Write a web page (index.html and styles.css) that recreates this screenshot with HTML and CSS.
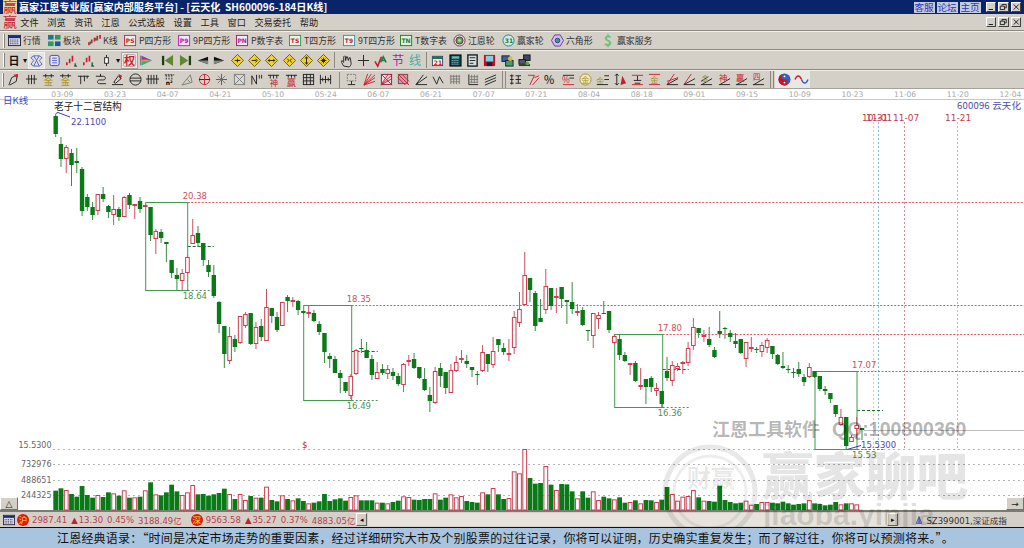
FILE: index.html
```html
<!DOCTYPE html>
<html lang="zh-CN">
<head>
<meta charset="utf-8">
<title>赢家江恩专业版</title>
<link rel="stylesheet" href="styles.css">
</head>
<body>
<div class="app">
  <header class="titlebar">
    <svg class="ic logo" viewBox="0 0 14 14"><rect width="14" height="14" fill="#e8d8a0"/><text class="t red" x="0" y="12" font-size="14">赢</text></svg>
    <span class="title-text">赢家江恩专业版[赢家内部服务平台] - [云天化  SH600096-184日K线]</span>
    <div class="title-links">
      <a class="tlink">客服</a><a class="tlink">论坛</a><a class="tlink">主页</a>
    </div>
    <div class="wbtns">
      <button class="wbtn"><svg viewBox="0 0 10 9"><path d="M2 7h5v1H2z"/></svg></button>
      <button class="wbtn"><svg viewBox="0 0 10 9"><path class="ln" d="M3.5 3V1.5h5v4H7M1.5 3.500h5v4h-5z"/></svg></button>
      <button class="wbtn"><svg viewBox="0 0 10 9"><path class="ln" d="M2 1.500l6 6M8 1.500l-6 6"/></svg></button>
    </div>
  </header>

  <nav class="menubar">
    <svg class="ic menu-logo" viewBox="0 0 14 14"><text class="t red" x="0" y="12" font-size="14">赢</text></svg>
    <span class="mi">文件</span><span class="mi">浏览</span><span class="mi">资讯</span><span class="mi">江恩</span><span class="mi">公式选股</span><span class="mi">设置</span><span class="mi">工具</span><span class="mi">窗口</span><span class="mi">交易委托</span><span class="mi">帮助</span>
    <div class="wbtns menu-wbtns">
      <button class="wbtn"><svg viewBox="0 0 10 9"><path d="M2 7h5v1H2z"/></svg></button>
      <button class="wbtn"><svg viewBox="0 0 10 9"><path class="ln" d="M3.5 3V1.500h5v4H7M1.500 3.500h5v4h-5z"/></svg></button>
      <button class="wbtn"><svg viewBox="0 0 10 9"><path class="ln" d="M2 1.500l6 6M8 1.500l-6 6"/></svg></button>
    </div>
  </nav>

  <div class="toolbar row1">
    <i class="grip"></i>
    <span class="tb w33"><svg class="ic" viewBox="0 0 14 14"><rect x="0.500" y="1.500" width="13" height="11" fill="#d8d8f0" stroke="#223"/><rect x="1" y="2" width="12" height="2.500" fill="#1a2a80"/><path class="k" d="M2 6.500h10M2 8.500h10M2 10.500h10" stroke-dasharray="1 1"/></svg><span>行情</span></span>
    <span class="tb w40"><svg class="ic" viewBox="0 0 14 14"><rect x="0" y="1" width="6" height="5" fill="#1a7a8a"/><rect x="7.500" y="1" width="6" height="5" fill="#2a9a60"/><rect x="0" y="8" width="6" height="5" fill="#2a9a60"/><rect x="7.500" y="8" width="6" height="5" fill="#1a5aa0"/></svg><span>板块</span></span>
    <span class="tb w36"><svg class="ic" viewBox="0 0 14 14"><path class="r2" d="M1 12v-3M4 10v-4M7 8V4M10 7V2M13 5V1"/><path class="g2" d="M2.500 11V8M8.500 7V4"/></svg><span>K线</span></span>
    <span class="tb w54"><svg class="ic" viewBox="0 0 14 14"><rect x="0.500" y="1.500" width="12" height="11" fill="#eee" stroke="#c03040"/><text class="t tiny red" x="2" y="9.500">PS</text></svg><span>P四方形</span></span>
    <span class="tb w58"><svg class="ic" viewBox="0 0 14 14"><rect x="0.500" y="1.500" width="12" height="11" fill="#f4e8f8" stroke="#c020c0"/><text class="t tiny mag" x="2" y="9.500">P9</text></svg><span>9P四方形</span></span>
    <span class="tb w53"><svg class="ic" viewBox="0 0 14 14"><rect x="0.500" y="1.500" width="12" height="11" fill="#eee" stroke="#a02060"/><text class="t tiny mag" x="1.500" y="9.500">PN</text></svg><span>P数字表</span></span>
    <span class="tb w54"><svg class="ic" viewBox="0 0 14 14"><rect x="0.500" y="1.500" width="12" height="11" fill="#e8f4e8" stroke="#20a040"/><text class="t tiny red" x="2" y="9.500">TS</text></svg><span>T四方形</span></span>
    <span class="tb w57"><svg class="ic" viewBox="0 0 14 14"><rect x="0.500" y="1.500" width="12" height="11" fill="#e8f8f4" stroke="#20a0a0"/><text class="t tiny red" x="2" y="9.500">T9</text></svg><span>9T四方形</span></span>
    <span class="tb w53"><svg class="ic" viewBox="0 0 14 14"><rect x="0.500" y="1.500" width="12" height="11" fill="#e0f0e0" stroke="#208020"/><text class="t tiny grn" x="1.500" y="9.500">TN</text></svg><span>T数字表</span></span>
    <span class="tb w49"><svg class="ic" viewBox="0 0 14 14"><circle cx="7" cy="7" r="6" fill="#e8d8d8" stroke="#803050"/><circle cx="7" cy="7" r="3.800" fill="#60a060" stroke="#404040"/><circle cx="7" cy="7" r="1.500" fill="#d0d0a0"/></svg><span>江恩轮</span></span>
    <span class="tb w49"><svg class="ic" viewBox="0 0 14 14"><circle cx="7" cy="7" r="6" fill="#d0e8e0" stroke="#208080"/><text class="t tiny grn" x="3" y="10">31</text></svg><span>赢家轮</span></span>
    <span class="tb w51"><svg class="ic" viewBox="0 0 14 14"><path d="M4 1h6l3.500 6L10 13H4L.5 7z" fill="#d0c0e8" stroke="#7030a0"/><circle cx="7" cy="7" r="2.500" fill="#40a060" stroke="#2040a0"/></svg><span>六角形</span></span>
    <span class="tb"><svg class="ic" viewBox="0 0 14 14"><text class="t" x="2" y="13" font-size="15" fill="#70c070" font-weight="700">$</text></svg><span>赢家服务</span></span>
  </div>

  <div class="toolbar row2">
    <i class="grip"></i>
    <span class="btn day">日</span><span class="caret">▾</span>
    <span class="btn raised"><svg class="ic" viewBox="0 0 14 14"><path class="b" d="M1 4l3-2h6l3 2-3 3 3 4-3 2H4l-3-2 3-4zM4 2l3 5 3-5M4 13l3-6 3 6"/></svg></span>
    <span class="btn"><svg class="ic" viewBox="0 0 14 14"><rect x="2" y="1.500" width="10" height="11" rx="2" fill="#e0e0f8" stroke="#4040b0"/><path class="b" d="M4.500 4.500h5M4.500 7h5M4.500 9.500h5"/></svg></span>
    <span class="btn"><svg class="ic" viewBox="0 0 14 14"><path class="r2" d="M2 12V9M5 10V5M8 8V2"/><path class="g2" d="M11 13v-3"/><path class="k" d="M10 13h3"/></svg></span>
    <span class="btn"><svg class="ic" viewBox="0 0 14 14"><path class="r2" d="M2 12V9M5 9V4M8 8V2"/><path class="g2" d="M11 13V9"/><path class="k" d="M10 13h3"/></svg></span>
    <span class="btn"><svg class="ic" viewBox="0 0 14 14"><path class="k" d="M7 1v3M7 10v3"/><rect x="5" y="4" width="4" height="6" fill="#fff" stroke="#222"/></svg></span><span class="caret">▾</span>
    <span class="btn pressed"><svg class="ic" viewBox="0 0 14 14"><rect x="0.500" y="0.500" width="13" height="13" rx="2" fill="#f6e8e8" stroke="#b0a0a0"/><text class="t red" x="1" y="11.500" font-size="12" font-weight="700">权</text></svg></span>
    <span class="btn"><svg class="ic" viewBox="0 0 16 14"><path d="M1 1v12" stroke="#404040" fill="none"/><path d="M2 1l13 6H2z" fill="#a030c0"/><path d="M2 7h13L2 13z" fill="#30b090"/><path d="M2 6h8v2H2z" fill="#e0a020"/></svg></span>
    <i class="sep-s"></i>
    <span class="btn"><svg class="ic" viewBox="0 0 14 14"><path fill="#204010" d="M1 2h2.500v10H1z"/><path fill="#608830" d="M13 1v12L4 7z"/></svg></span>
    <span class="btn"><svg class="ic" viewBox="0 0 14 14"><path fill="#204010" d="M10.500 2H13v10h-2.500z"/><path fill="#608830" d="M1 1v12l9-6z"/></svg></span>
    <span class="btn"><svg class="ic" viewBox="0 0 14 14"><path fill="#101010" d="M13 3v8L2 7z"/><path fill="#808880" d="M13 7v4L2 7z"/></svg></span>
    <span class="btn"><svg class="ic" viewBox="0 0 14 14"><path fill="#101010" d="M1 3v8l11-4z"/><path fill="#808880" d="M1 7v4l11-4z"/></svg></span>
    <span class="btn"><svg class="ic" viewBox="0 0 14 14"><path class="dia" d="M7 .5L13.500 7 7 13.500.5 7z"/><path class="k" d="M4 7h6M7 5v4"/></svg></span>
    <span class="btn"><svg class="ic" viewBox="0 0 14 14"><path class="dia" d="M7 .5L13.500 7 7 13.500.5 7z"/><path class="k" d="M4 7h5M8 5l2 2-2 2"/></svg></span>
    <span class="btn"><svg class="ic" viewBox="0 0 14 14"><path class="dia" d="M7 .5L13.500 7 7 13.500.5 7z"/><path class="k" d="M3.500 7h7M5 5.500L3.500 7 5 8.500M9 5.500L10.500 7 9 8.500"/></svg></span>
    <span class="btn"><svg class="ic" viewBox="0 0 14 14"><path class="dia" d="M7 .5L13.500 7 7 13.500.5 7z"/><path class="k" d="M4.500 5l2 2-2 2M9.500 5l-2 2 2 2"/></svg></span>
    <span class="btn"><svg class="ic" viewBox="0 0 14 14"><path class="dia" d="M7 .5L13.500 7 7 13.500.5 7z"/><path class="k" d="M7 3v8M5.500 5L7 3l1.500 2M5.500 9L7 11l1.500-2"/></svg></span>
    <span class="btn"><svg class="ic" viewBox="0 0 14 14"><path class="dia" d="M7 .5L13.500 7 7 13.500.5 7z"/><path class="k" d="M7 4v6M4 7h6M5 5l4 4M9 5l-4 4"/></svg></span>
    <i class="sep-e"></i>
    <span class="btn"><svg class="ic" viewBox="0 0 14 14"><path class="k" d="M4 13c-2-3-3-5-2-6l2 2V3l1-1 1 1v4l1-4h1l1 4 1-3h1l1 6c0 2-1 3-2 4z"/></svg></span>
    <span class="btn"><svg class="ic" viewBox="0 0 14 14"><path class="k" d="M7 1v12M1 7h12"/></svg></span>
    <span class="btn"><svg class="ic" viewBox="0 0 14 14"><path class="r2" d="M1 8l3 5 4-10"/><path class="g2" d="M7 9l3-6 3 6M8 7h4"/></svg></span>
    <span class="btn"><svg class="ic" viewBox="0 0 14 14"><text class="t mag" x="0" y="12" font-size="13">节</text></svg></span>
    <span class="btn"><svg class="ic" viewBox="0 0 14 14"><text class="t" x="0" y="12" font-size="13" fill="#40b0a0">线</text></svg></span>
    <i class="sep-e"></i>
    <span class="btn"><svg class="ic" viewBox="0 0 14 14"><rect x="1.500" y="2.500" width="11" height="10" fill="#f8f8f0" stroke="#404060"/><rect x="1.500" y="2.500" width="11" height="3" fill="#207060"/><text class="t tiny red" x="3" y="11.500">21</text></svg></span>
    <span class="btn"><svg class="ic" viewBox="0 0 14 14"><rect x="1" y="1" width="12" height="12" fill="#104050" stroke="#000"/><rect x="3" y="2.500" width="8" height="2.500" fill="#60c0c0"/><path d="M3 7h8M3 9h8M3 11h8" stroke="#c0e0e0" stroke-dasharray="1 1" fill="none"/></svg></span>
    <span class="btn"><svg class="ic" viewBox="0 0 14 14"><rect x="2" y="1" width="10" height="12" fill="#d0e0d8" stroke="#102030" stroke-width="1.500"/><path class="k" d="M4 4h6M4 7h6M4 10h4"/></svg></span>
    <span class="btn"><svg class="ic" viewBox="0 0 14 14"><rect x="1" y="1" width="12" height="12" fill="#c01020"/><rect x="3" y="2" width="8" height="6" fill="#80d0e0"/><rect x="4" y="9" width="6" height="4" fill="#102040"/></svg></span>
    <span class="btn"><svg class="ic" viewBox="0 0 14 14"><rect x="1" y="2" width="8" height="6" fill="#4060a0" stroke="#102040"/><rect x="5" y="7" width="8" height="6" fill="#40a060" stroke="#102040"/><circle cx="10" cy="5" r="2.500" fill="#d0c040"/></svg></span>
    <span class="btn"><svg class="ic" viewBox="0 0 14 14"><rect x="6" y="1" width="7" height="6" fill="#404858" stroke="#101820"/><rect x="1" y="6" width="7" height="5" fill="#505868" stroke="#101820"/><path d="M1 12h12" stroke="#304030" stroke-width="2"/><circle cx="10" cy="10" r="2" fill="#60a040"/></svg></span>
  </div>

  <div class="toolbar row3">
    <i class="grip"></i>
    <span class="btn"><svg class="ic" viewBox="0 0 14 14"><path class="k" d="M2 13l3-8 6-3-1 7-7 4"/><path d="M7 2l5-1-1 5z" fill="#d02030"/></svg></span>
    <span class="btn"><svg class="ic" viewBox="0 0 14 14"><path class="k" d="M4 2v10M7 2v10M10 2v10M1 6.500h12"/></svg></span>
    <span class="btn"><svg class="ic" viewBox="0 0 14 14"><path class="k" d="M1 3h12M4 1v4M10 1v4"/><text class="t au" x="2" y="13" font-size="10">金</text></svg></span>
    <span class="btn"><svg class="ic" viewBox="0 0 14 14"><path class="k" d="M1 3h12M4 1v4M10 1v4"/><text class="t au" x="2" y="13" font-size="10">金</text></svg></span>
    <span class="btn"><svg class="ic" viewBox="0 0 14 14"><path class="k" d="M1 3.500h12M4 3v9M8 3v6M11 3v3"/></svg></span>
    <span class="btn"><svg class="ic" viewBox="0 0 14 14"><path class="k" d="M2 3.500h8c3 0 3 4 0 4H6c-3 0-3 4 0 4h7"/><path class="k" d="M7 1v3"/></svg></span>
    <span class="btn"><svg class="ic" viewBox="0 0 14 14"><path d="M8 1l4 2-2 4z" fill="#d02030"/><path class="k" d="M1 12.500h12M3 10l5-7 3 3-6 5z"/></svg></span>
    <span class="btn"><svg class="ic" viewBox="0 0 14 14"><circle class="k" cx="7" cy="7" r="6"/><path class="k" d="M1 5.500h12M1 8.500h12"/></svg></span>
    <span class="btn"><svg class="ic" viewBox="0 0 14 14"><path class="k" d="M2.500 2v10M5.500 2v10M8.500 2v10M11.500 2v10M0 6.500h14"/></svg></span>
    <span class="btn"><svg class="ic" viewBox="0 0 14 14"><path class="k" d="M2 2h10M3.500 2v5M6.500 2v5M9.500 2v5" stroke-dasharray="2 1"/><text class="t tiny" x="3" y="13">n²</text></svg></span>
    <span class="btn"><svg class="ic" viewBox="0 0 14 14"><path class="gy" d="M1 13L10 2l2 8zM7 7l3 3"/></svg></span>
    <span class="btn"><svg class="ic" viewBox="0 0 14 14"><circle cx="7" cy="7" r="5.500" fill="none" stroke="#c03040"/><path class="k" d="M1 7h12"/><path class="r" d="M7 1v12"/></svg></span>
    <span class="btn"><svg class="ic" viewBox="0 0 14 14"><path class="r" d="M7 1v12M1 7h12"/><path class="gy" d="M3 3l8 8M11 3l-8 8"/></svg></span>
    <span class="btn"><svg class="ic" viewBox="0 0 14 14"><rect x="1.500" y="1.500" width="11" height="11" fill="#d8d8d8" stroke="#808080"/><path class="gy" d="M2 2l10 10M12 2L2 12"/></svg></span>
    <span class="btn"><svg class="ic" viewBox="0 0 14 14"><path class="k" d="M2 12.500V3l5 9V2M10 2v4M12.500 2v4"/></svg></span>
    <span class="btn"><svg class="ic" viewBox="0 0 14 14"><path class="k" d="M1 2.500h12M3.500 2v4M7 2v4M10.500 2v4"/><text class="t red" x="3" y="14" font-size="9">神</text></svg></span>
    <span class="btn"><svg class="ic" viewBox="0 0 14 14"><path class="k" d="M1 2.500h12M3.500 2v3M7 2v3M10.500 2v3"/><text class="t red" x="2" y="14" font-size="10">赢</text></svg></span>
    <span class="btn"><svg class="ic" viewBox="0 0 14 14"><rect class="k" x="1.500" y="1.500" width="11" height="11"/><path class="k" d="M1 5h12M1 8.500h12M5 1v12M9 1v12"/></svg></span>
    <span class="btn"><svg class="ic" viewBox="0 0 14 14"><path class="k" d="M1.500 2v10M12.500 2v10M1 7h12M7 3v8M4 5v4M10 5v4"/></svg></span>
    <i class="sep-e sep-3"></i>
    <span class="btn"><svg class="ic" viewBox="0 0 14 14"><rect class="gy" x="2.500" y="1.500" width="9" height="7" stroke-dasharray="2 1"/><path class="k" d="M7 8.500v4M3 12.500h8"/></svg></span>
    <span class="btn"><svg class="ic" viewBox="0 0 14 14"><path class="r" d="M1 13L13 2M1 13L13 5M1 13L13 9M1 13L9 1M1 13L5 1"/></svg></span>
    <span class="btn"><svg class="ic" viewBox="0 0 14 14"><rect x="1.500" y="1.500" width="11" height="11" fill="#f0d8e0" stroke="#802040"/><path class="r" d="M1 13L13 2M1 13L13 6M1 13L9 1M1 1l12 12"/></svg></span>
    <span class="btn"><svg class="ic" viewBox="0 0 14 14"><rect x="1.500" y="1.500" width="10" height="10" fill="#c0a0b0" stroke="#804050"/><path class="r" d="M1 1l12 12M1 5l8 8M5 1l8 8"/></svg></span>
    <span class="btn"><svg class="ic" viewBox="0 0 14 14"><path class="k" d="M1 12.500h12M1 12.500L13 4M1 12.500L9 2"/></svg></span>
    <span class="btn"><svg class="ic" viewBox="0 0 14 14"><path class="k" d="M1 4l4 8 3-8 4 7"/></svg></span>
    <span class="btn"><svg class="ic" viewBox="0 0 14 14"><path class="gy" d="M2 2v10M5 2v10M8 2v10M11 2v10M1 3.500h11M1 6.500h11M1 9.500h11"/></svg></span>
    <span class="btn"><svg class="ic" viewBox="0 0 14 14"><path class="k" d="M2 1.500v11h10"/><path class="gy" d="M5 2v9M8 2v9M11 2v9M3 4h9M3 7h9M3 10h9"/></svg></span>
    <span class="btn"><svg class="ic" viewBox="0 0 14 14"><path class="k" d="M1 7L13 2M1 10L13 5M1 13L13 8"/></svg></span>
    <i class="sep-d"></i>
    <span class="btn"><svg class="ic" viewBox="0 0 14 14"><path class="k" d="M3 1.500v11M1 3h4M1 7h4M1 11h4M7 3h6M7 7h6M7 11h6M10 3v8"/></svg></span>
    <span class="btn"><svg class="ic" viewBox="0 0 14 14"><path class="r" d="M1 2.500h7L3 13M8 5l5-2M6 13l7-8"/></svg></span>
    <span class="btn"><svg class="ic" viewBox="0 0 14 14"><text class="t" x="0" y="12" font-size="12">%</text></svg></span>
    <span class="btn"><svg class="ic" viewBox="0 0 14 14"><path class="k" d="M1 2.500h12M8 5.500h5"/><text class="t red" x="0" y="11" font-size="9">%</text><path class="r" d="M1 12.500h12"/></svg></span>
    <span class="btn"><svg class="ic" viewBox="0 0 14 14"><circle cx="7" cy="7" r="6" fill="#f0e8c0" stroke="#a09040"/><text class="t au" x="2.500" y="10.500" font-size="9">金</text></svg></span>
    <span class="btn"><svg class="ic" viewBox="0 0 14 14"><text class="t au" x="0" y="12" font-size="9">金</text><path class="k" d="M9 3h5M9 7h5M1 12.500h12"/></svg></span>
    <span class="btn"><svg class="ic" viewBox="0 0 14 14"><path class="k" d="M3 1v12M1 3l2-2 2 2M1 11l2 2 2-2"/><path d="M7 13l2-10 4 8z" fill="#c02030"/></svg></span>
    <span class="btn"><svg class="ic" viewBox="0 0 14 14"><path class="r" d="M1 2.500h12M1 12.500h12"/><path class="k" d="M3 8h8M7 3v5M4 11h6"/></svg></span>
    <span class="btn"><svg class="ic" viewBox="0 0 14 14"><path class="r" d="M1 1.500h12M1 12.500h12"/><text class="t au" x="2.500" y="11" font-size="9">金</text></svg></span>
    <span class="btn"><svg class="ic" viewBox="0 0 14 14"><path class="k" d="M1 12.500h12M1 12.500L13 6"/><path class="r" d="M1 12.500L9 1M1 9l12-4"/></svg></span>
    <span class="btn"><svg class="ic" viewBox="0 0 14 14"><path class="k" d="M1 12.500h12M1 12.500L13 6"/><path class="r" d="M1 12.500L9 1"/></svg></span>
    <span class="btn"><svg class="ic" viewBox="0 0 14 14"><path class="k" d="M1 12.500h12M2 12.500L13 6M1 9l8-5"/><text class="t au" x="2" y="9" font-size="7">金</text></svg></span>
    <span class="btn"><svg class="ic" viewBox="0 0 14 14"><path class="k" d="M1 12.500h12M2 12.500L13 6"/><text class="t red" x="1" y="9" font-size="9">神</text></svg></span>
    <span class="btn"><svg class="ic" viewBox="0 0 14 14"><path class="k" d="M1 12.500h12M2 12.500L13 6"/><text class="t red" x="1" y="9" font-size="9">赢</text></svg></span>
    <span class="btn"><svg class="ic" viewBox="0 0 14 14"><path class="k" d="M1 12.500h12M2 12.500L13 6"/><text class="t red" x="1" y="8" font-size="8">四</text></svg></span>
    <i class="sep-d"></i>
    <span class="btn on"><svg class="ic" viewBox="0 0 14 14"><circle cx="7" cy="7" r="6.500" fill="#3060c0"/><path d="M7 .5a6.500 6.500 0 0 0 0 13 3.250 3.250 0 0 0 0-6.500 3.250 3.250 0 0 1 0-6.500z" fill="#d01020"/><circle cx="7" cy="3.700" r="1" fill="#fff"/><circle cx="7" cy="10.300" r="1" fill="#fff"/></svg></span>
    <span class="btn on"><svg class="ic" viewBox="0 0 14 14"><path d="M0 7c2-5 5-5 7 0" fill="none" stroke="#d02030" stroke-width="1.500"/><path d="M7 7c2 5 5 5 7 0" fill="none" stroke="#3060c0" stroke-width="1.500"/></svg></span>
  </div>

  <div class="dates">
    <span>03-09</span><span>03-23</span><span>04-07</span><span>04-21</span><span>05-10</span><span>05-24</span><span>06-07</span><span>06-21</span><span>07-07</span><span>07-21</span><span>08-04</span><span>08-18</span><span>09-01</span><span>09-15</span><span>10-09</span><span>10-23</span><span>11-06</span><span>11-20</span><span>12-04</span>
  </div>

  <main class="chart">
    <svg id="kline" class="plot" viewBox="0 100 1024 410" aria-label="日K线图"></svg>
    <button class="corner corner-l">△</button>
    <button class="corner corner-r">→</button>
  </main>

  <footer class="status">
    <svg class="ic st-cal" viewBox="0 0 14 14"><rect x="0.500" y="1.500" width="13" height="11" fill="#d8d8f0" stroke="#223"/><rect x="1" y="2" width="12" height="2.500" fill="#1a2a80"/><path class="k" d="M2 6.500h10M2 8.500h10M2 10.500h10" stroke-dasharray="1 1"/></svg>
    <span class="badge">沪</span>
    <span class="idx idx-a">2987.41</span><span class="idx up">▲</span><span class="idx">13.30</span><span class="idx">0.45%</span><span class="idx">3188.49亿</span>
    <span class="badge badge-sz">深</span>
    <span class="idx idx-a">9563.58</span><span class="idx up">▲</span><span class="idx">35.27</span><span class="idx">0.37%</span><span class="idx">4883.05亿</span>
    <div class="scroll">
      <span class="sbtn">◂</span><span class="strack"></span><span class="sbtn">▸</span>
    </div>
    <div class="stock-sel">
      <svg class="ic" viewBox="0 0 14 14"><path d="M7 1L2 13h10z" fill="#9090d8" stroke="#3030a0"/><path d="M7 1v12" stroke="#3030a0"/></svg>
      <span>SZ399001,深证成指</span>
    </div>
  </footer>

  <div class="quote">江恩经典语录：“时间是决定市场走势的重要因素，经过详细研究大市及个别股票的过往记录，你将可以证明，历史确实重复发生；而了解过往，你将可以预测将来。”。</div>

  <svg class="watermark" viewBox="0 0 1024 527" aria-hidden="true">
    <circle class="wm-ring" cx="710" cy="492" r="45"/>
    <circle class="wm-ring2" cx="710" cy="492" r="36"/>
    <text class="wm-cn" x="687" y="487" font-size="24">财赢</text>
    <text class="wm-cn wm-small" x="712" y="436">江恩工具软件</text>
    <text class="wm-en" x="832" y="436">QQ:100800360</text>
    <text class="wm-cn wm-big" x="762" y="495">赢家聊吧</text>
    <text class="wm-url" x="763" y="525">jiaoba.yinjia</text>
  </svg>
</div>
<script src="chart.js"></script>
</body>
</html>
```
FILE: styles.css
```css
* { box-sizing: border-box; }
html, body { margin: 0; padding: 0; width: 1024px; height: 548px; overflow: hidden; background: #fff; }
body { font-family: "Noto Sans CJK SC", "Liberation Sans", sans-serif; color: #222; }
.app { position: relative; width: 1024px; height: 548px; display: flex; flex-direction: column; }

.titlebar { height: 14px; background: #0a246a; display: flex; align-items: center; padding-left: 3px; color: #fff; flex: none; }
.logo { width: 10px; height: 10px; margin-right: 2px; }
.title-text { font-size: 10.100px; font-weight: 700; white-space: pre; line-height: 14px; }
.title-links { margin-left: auto; display: flex; gap: 2px; margin-right: 5px; }
.tlink { width: 21px; height: 11px; background: #c3cada; color: #2a35c8; font-size: 9.6px; line-height: 10px; text-align: center; }
.wbtns { display: flex; gap: 2px; margin-right: 3px; }
.wbtn { width: 10.500px; height: 10px; padding: 0; border: 1px solid; border-color: #fff #404040 #404040 #fff; background: #d4d0c8; display: block; }
.wbtn svg { display: block; width: 100%; height: 100%; }
.wbtn .ln { fill: none; stroke: #111; }

.menubar { height: 17px; background: #d4d0c8; display: flex; align-items: center; padding-left: 3px; border-bottom: 1px solid #8c8981; flex: none; }
.menu-logo { width: 13px; height: 13px; margin-right: -1px; }
.mi { font-size: 9.200px; padding: 0 4.300px; line-height: 16px; color: #222; white-space: nowrap; }
.menu-wbtns { margin-left: auto; }

.toolbar { background: #d4d0c8; display: flex; align-items: center; flex: none; border-top: 1px solid #f1efea; border-bottom: 1px solid #8c8981; }
.row1 { height: 19px; padding-left: 3px; }
.row2 { height: 20px; padding-left: 3px; }
.row3 { height: 19px; padding-left: 2px; border-bottom-color: #a5a299; }
.grip { width: 2px; height: 14px; border-left: 1px solid #fff; border-right: 1px solid #808080; flex: none; margin-right: 1px; }

.tb { display: inline-flex; align-items: center; gap: 2px; font-size: 8.900px; white-space: nowrap; color: #333; flex: none; }
.tb .ic { width: 13px; height: 13px; }
.w33 { width: 40px; margin-left: 2px; }
.w40 { width: 40px; }
.w36 { width: 36px; }
.w54 { width: 54px; }
.w58 { width: 58px; }
.w53 { width: 53px; }
.w57 { width: 57px; }
.w49 { width: 49px; }
.w51 { width: 51px; }

.ic { width: 14px; height: 14px; display: block; flex: none; overflow: visible; }
.btn { width: 17.350px; height: 17px; display: inline-flex; align-items: center; justify-content: center; flex: none; }
.btn .ic { width: 13px; height: 13px; }
.day { font-size: 11px; font-weight: 700; width: 16px; color: #111; }
.caret { width: 6px; font-size: 8px; color: #111; flex: none; text-align: center; line-height: 10px; }
.raised { background: #e6e4df; outline: 1px solid #f4f3f0; outline-offset: -1px; }
.pressed { background: #ebe8e2; outline: 1px solid #a8a69f; outline-offset: -1px; }
.on { background: #e9e8e4; }
.sep-s { width: 3.600px; flex: none; }
.sep-e { width: 3px; height: 16px; flex: none; border-left: 1px solid #8c8981; margin-left: 2px; }
.sep-3 { margin-left: 4px; width: 4.700px; }
.sep-d { height: 17px; flex: none; border-left: 1px solid #8c8981; border-right: 1px solid #8c8981; margin: 0 1px 0 3px; width: 4px; }

.k { fill: none; stroke: #222; stroke-width: 1; }
.r { fill: none; stroke: #d02030; stroke-width: 1; }
.b { fill: none; stroke: #5060c8; stroke-width: 1; }
.gy { fill: none; stroke: #7c7c78; stroke-width: 1; }
.r2 { fill: none; stroke: #c82030; stroke-width: 1.800; }
.g2 { fill: none; stroke: #208040; stroke-width: 1.800; }
.dia { fill: #f2d22a; stroke: #6a5a10; stroke-width: 1; }
.t { font-family: "Noto Sans CJK SC", "DejaVu Sans", sans-serif; }
.tiny { font-family: "DejaVu Sans", sans-serif; font-size: 6.500px; font-weight: 700; }
.red { fill: #c81e30; }
.mag { fill: #b01ab0; }
.grn { fill: #1a8040; }
.au { fill: #a89020; }

.dates { height: 11px; background: #fff; border-bottom: 1px solid #c8c8c8; display: flex; padding: 1px 0 0 36px; flex: none; }
.dates span { width: 52.680px; flex: none; text-align: center; font-family: "DejaVu Sans", sans-serif; font-size: 7.600px; line-height: 10px; color: #a8a8a8; }

.chart { position: relative; height: 410px; flex: none; background: transparent; }
.plot { display: block; width: 1024px; height: 410px; overflow: visible; }
.plot text { font-family: "DejaVu Sans", sans-serif; font-size: 8.500px; }
.plot .cn { font-family: "Noto Sans CJK SC", sans-serif; }
.lbl-cn { font-size: 9.700px !important; fill: #222; }
.lbl-day { font-size: 9.500px !important; fill: #3a4ac0; }
.lbl-code { font-size: 9.500px !important; fill: #4a4aa8; letter-spacing: .2px; }
.lbl-blue { fill: #4a4ab0; }
.lbl-red { fill: #c85060; }
.lbl-grn { fill: #4f8f55; }
.lbl-date { fill: #c04050; font-size: 9px !important; }
.lbl-axis { fill: #666; font-size: 8px !important; }
.lbl-ds { fill: #c02030; }
.corner { position: absolute; bottom: 0; height: 13px; width: 18px; padding: 0; border: 1px solid; border-color: #fff #707070 #707070 #fff; background: #d4d0c8; font-size: 9px; line-height: 10px; color: #222; font-family: "DejaVu Sans", sans-serif; }
.corner-l { left: 0; }
.corner-r { right: 0; }

.status { height: 18px; background: #d4d0c8; border-top: 2px solid #7c7a74; border-bottom: 1px solid #111; display: flex; align-items: center; padding-left: 3px; flex: none; }
.st-cal { width: 12px; height: 12px; margin-right: 2px; }
.badge { width: 12px; height: 12px; border-radius: 50%; background: #e01810; color: #f8e040; font-size: 8.500px; line-height: 11px; text-align: center; flex: none; margin-right: 3px; }
.badge-sz { margin-left: 5px; }
.idx { font-family: "DejaVu Sans", "Noto Sans CJK SC", sans-serif; font-size: 8.500px; color: #b84050; margin-right: 4px; white-space: nowrap; flex: none; }
.idx + .idx.up { margin-right: 1px; }
.up { color: #c81e30; }
.scroll { display: flex; width: 542px; height: 13px; flex: none; margin-left: -3px; }
.sbtn { width: 11px; height: 13px; font-size: 7px; line-height: 11px; text-align: center; border: 1px solid; border-color: #fff #606060 #606060 #fff; background: #d4d0c8; color: #111; flex: none; }
.strack { flex: 1; background: #e6e3dc; margin: 0 1px; }
.stock-sel { display: flex; align-items: center; gap: 3px; margin-left: 17px; font-family: "DejaVu Sans", "Noto Sans CJK SC", sans-serif; font-size: 8.500px; color: #333; white-space: nowrap; }
.stock-sel .ic { width: 8px; height: 12px; }

.quote { flex: 1; background: #a9c4de; padding-left: 57px; font-size: 12px; letter-spacing: .2px; line-height: 20px; color: #111; white-space: nowrap; overflow: hidden; }

.watermark { position: absolute; left: 0; top: 0; width: 1024px; height: 527px; pointer-events: none; }
.wm-ring { fill: none; stroke: #000; stroke-opacity: .09; stroke-width: 5; }
.wm-ring2 { fill: none; stroke: #000; stroke-opacity: .07; stroke-width: 3; }
.wm-cn { font-family: "Noto Sans CJK SC", sans-serif; font-weight: 700; fill: #000; fill-opacity: .09; }
.wm-small { font-size: 18px; fill-opacity: .3; }
.wm-big { font-size: 51.500px; fill-opacity: .1; font-weight: 900; }
.wm-en { font-family: "Liberation Sans", sans-serif; font-weight: 700; font-size: 19.500px; fill: #000; fill-opacity: .3; }
.wm-url { font-family: "Liberation Sans", sans-serif; font-weight: 700; font-size: 30px; fill: #000; fill-opacity: .14; }
```
FILE: chart.js
```js
(function () {
  var NS = 'http://www.w3.org/2000/svg';
  var svg = document.getElementById('kline');
  function el(n, a, txt, parent) {
    var e = document.createElementNS(NS, n);
    for (var k in a) e.setAttribute(k, a[k]);
    if (txt != null) e.textContent = txt;
    (parent || svg).appendChild(e);
    return e;
  }
  var RED = '#cc3d50', GRN = '#0a7a18';
  var X0 = 55.7, STEP = 5.27;

  // type, wick top, body top, body bottom, wick bottom
  var c = [
    'g,114,116,134,137','g,137,144,159,167','r,145,147,159,173','g,149,153,165,186','g,148,161,163,173',
    'g,167,169,211,216','g,194,197,207,211','g,202,207,215,220','r,194,194,211,215','g,187,194,199,202',
    'g,205,206,212,218','r,195,209,215,225','g,207,209,217,221','r,196,197,217,217','g,193,195,205,209',
    'r,204,204,205,219','g,197,201,209,213','r,205,205,207,207','g,207,207,235,241','r,229,231,239,254',
    'g,229,232,238,243','g,242,242,244,262','g,260,260,273,278','g,268,275,279,290','r,269,273,281,290',
    'r,255,257,273,273','r,219,235,244,244','g,226,233,243,247','g,243,243,260,266','g,260,265,272,277',
    'g,265,275,296,298','g,301,302,324,333','g,326,326,354,368','r,327,336,361,364','g,335,339,347,352',
    'r,316,316,343,344','r,312,314,326,328','g,313,313,344,345','r,322,327,344,349','g,319,326,337,341',
    'r,289,307,341,341','g,308,308,316,323','g,312,317,330,332','r,302,302,326,326','g,295,297,301,312',
    'r,297,300,301,307','g,300,301,310,315','g,311,311,313,314','r,305,312,313,318','g,310,313,321,322',
    'g,321,324,332,335','g,333,333,352,363','g,353,356,359,368','g,356,359,373,373','g,370,373,378,393',
    'g,382,382,391,393','r,374,376,396,399','r,349,350,374,375','g,339,348,349,353','g,342,350,358,358',
    'g,355,359,375,380','r,362,372,379,379','g,364,369,373,375','r,365,369,374,379','g,368,372,376,380',
    'g,373,376,384,386','r,363,364,385,392','r,355,360,362,366','g,353,359,368,369','g,367,367,378,379',
    'g,368,379,390,391','g,387,395,401,412','r,367,371,403,404','g,363,368,376,387','g,372,372,388,394',
    'r,364,370,393,393','r,356,362,371,372','r,350,358,359,363','g,355,361,364,368','g,367,367,370,377',
    'g,371,374,375,385','r,345,352,371,372','g,354,354,364,372','r,337,351,365,368','g,339,339,345,352',
    'g,343,348,352,355','r,339,353,354,361','r,311,317,348,354','r,292,309,323,327','r,252,275,305,305',
    'g,278,278,290,302','g,291,293,326,331','g,299,318,322,322','r,269,286,310,314','g,288,288,306,310',
    'r,288,296,297,313','g,287,287,299,308','g,300,300,302,324','g,282,302,309,314','r,304,311,312,316',
    'g,307,310,325,326','g,330,330,331,341','r,313,313,336,348','r,312,315,319,329','g,301,313,314,313',
    'g,311,311,330,333','r,334,336,343,344','g,334,339,355,360','g,352,355,361,362','r,363,363,365,375',
    'g,361,363,381,382','r,368,385,387,390','g,379,379,387,404','g,376,378,387,392','r,383,388,391,396',
    'g,391,391,404,407','g,357,371,378,381','r,361,365,381,386','r,363,366,369,371','r,361,362,364,374',
    'r,342,348,363,366','r,318,327,346,350','g,328,328,333,338','r,330,335,336,342','g,327,339,345,347',
    'g,347,350,357,358','g,311,331,334,338','g,327,328,329,339','g,330,333,337,342','g,333,341,344,348',
    'g,339,339,353,354','r,342,342,359,367','r,337,347,348,352','g,347,349,350,353','r,342,345,352,357',
    'r,338,340,348,353','g,346,346,354,359','g,354,355,364,365','g,352,366,368,369','g,365,369,370,373',
    'g,368,372,373,378','g,362,369,374,377','g,374,377,382,386','r,363,367,377,378','g,371,371,377,378',
    'g,376,376,389,391','g,386,389,391,395','g,393,393,399,403','g,405,405,414,417','r,409,417,425,426',
    'g,417,417,446,450','r,435,437,442,442','r,417,425,429,438','g,428,428,430,440'
  ].map(function (s) {
    var p = s.split(',');
    return { t: p[0], h: +p[1], o: +p[2], b: +p[3], l: +p[4] };
  });

  // zoomed tops of the volume bars (baseline 240 / 330, 3 units per pixel)
  var va = [182,175,180,192,200,168,195,203,195,201,187,190,197,181,203,202,200,181,157,193,196,187,164,184,195,187,165,193,192,197,193,189,176,192,207,192,210,198,203,203,170,210,214,196,207,211,205,213,220,218,214,192,213,208,
    205,212,201,196,211,211,211,218,218,220,216,212,199,201,209,210,207,207,190,209,203,193,202,198,213,216,218,187,193,174,193,207,204,124,130,57,144,161,159,108,164,180,162,163,184,205,184,203,184,210,200,205,208,202,218,216,211,220,210,211,216,209,171,192,212];
  var vb = [290,288,270,292,302,303,305,257,300,306,310,308,302,314,312,306,306,308,310,305,310,314,312,310,300,310,312,316,314,306,313,310,310,313];
  var vols = va.map(function (v) { return (240 - v) / 3; }).concat(vb.map(function (v) { return (330 - v) / 3; }));

  // dotted price / volume grid
  [449.5, 464.5, 480.5, 495.5].forEach(function (y) {
    el('line', { x1: 53, x2: 1024, y1: y, y2: y, stroke: '#b4b4b4', 'stroke-dasharray': '2 3' });
  });
  el('line', { x1: 864, x2: 1024, y1: 430.5, y2: 430.5, stroke: '#bdbdbd' });

  // cycle date lines
  [[873.5, '#b4d4ec'], [878.5, '#8cbce0'], [904.5, '#dc8c98'], [957.5, '#a0c4e4']].forEach(function (v) {
    el('line', { x1: v[0], x2: v[0], y1: 122, y2: 449, stroke: v[1], 'stroke-dasharray': '2 2' });
  });

  // Gann boxes
  [
    { x1: 145.7, x2: 187.7, top: 202, bot: 290, mid: 246, hi: '20.38', lo: '18.64' },
    { x1: 303.7, x2: 351.7, top: 305, bot: 400, mid: 351, hi: '18.35', lo: '16.49' },
    { x1: 614.7, x2: 662.7, top: 334, bot: 407, mid: 369, hi: '17.80', lo: '16.36' },
    { x1: 815, x2: 857, top: 371, bot: 449, mid: 410, hi: '17.07', lo: '15.53' }
  ].forEach(function (b) {
    el('line', { x1: b.x2, x2: 1024, y1: b.top + .5, y2: b.top + .5, stroke: '#dc5868', 'stroke-dasharray': '2 1.500' });
    el('line', { x1: b.x2, x2: b.x2 + 26, y1: b.mid + .5, y2: b.mid + .5, stroke: '#1a6a28', 'stroke-dasharray': '3 2' });
    el('line', { x1: b.x2, x2: b.x2 + 26, y1: b.bot + .5, y2: b.bot + .5, stroke: '#5a8a60', 'stroke-dasharray': '2 2' });
    el('rect', { x: b.x1, y: b.top + .5, width: b.x2 - b.x1, height: b.bot - b.top, fill: 'none', stroke: '#3f9a4c' });
    el('text', { x: b.x2 - 5, y: b.top - 3, class: 'lbl-red' }, b.hi);
    el('text', { x: b.x2 - 5, y: b.bot + 9, class: 'lbl-grn' }, b.lo);
  });

  // candles and volume
  c.forEach(function (k, i) {
    var x = X0 + STEP * i;
    var col = k.t === 'g' ? GRN : RED;
    el('line', { x1: x, x2: x, y1: k.h, y2: k.l, stroke: k.t === 'g' ? '#3a8a44' : '#d0505f' });
    if (k.t === 'g') {
      el('rect', { x: x - 2.2, y: k.o, width: 4.4, height: Math.max(k.b - k.o, 1), fill: col });
    } else {
      el('rect', { x: x - 1.8, y: k.o + .5, width: 3.6, height: Math.max(k.b - k.o - 1, 1), fill: '#fff', stroke: col });
    }
    var h = vols[i] || 0;
    if (k.t === 'g') {
      el('rect', { x: x - 2.4, y: 510 - h, width: 4.8, height: h, fill: GRN });
    } else {
      el('rect', { x: x - 1.9, y: 510 - h + .5, width: 3.8, height: h - .5, fill: '#fff', stroke: RED });
    }
  });

  // labels
  el('text', { x: 3, y: 104, class: 'cn lbl-day' }, '日K线');
  el('text', { x: 54, y: 110, class: 'cn lbl-cn' }, '老子十二宫结构');
  el('text', { x: 957, y: 109, class: 'cn lbl-code' }, '600096  云天化');
  el('path', { d: 'M55.7 113.500L58 112.500 70 117', fill: 'none', stroke: '#3a3ab0' });
  el('text', { x: 71, y: 125, class: 'lbl-blue' }, '22.1100');
  el('path', { d: 'M847 449.500L861 445.500', fill: 'none', stroke: '#3a3ab0' });
  el('text', { x: 861, y: 448, class: 'lbl-blue' }, '15.5300');
  el('text', { x: 862, y: 121, class: 'lbl-date' }, '10-31');
  el('text', { x: 866, y: 121, class: 'lbl-date' }, '11-01');
  el('text', { x: 893, y: 121, class: 'lbl-date' }, '11-07');
  el('text', { x: 945, y: 121, class: 'lbl-date' }, '11-21');
  el('text', { x: 302, y: 448, class: 'lbl-ds' }, '$');
  [['15.5300', 448], ['732976', 467], ['488651', 483], ['244325', 498]].forEach(function (v) {
    el('text', { x: 51.5, y: v[1], 'text-anchor': 'end', class: 'lbl-axis' }, v[0]);
  });
})();
```
